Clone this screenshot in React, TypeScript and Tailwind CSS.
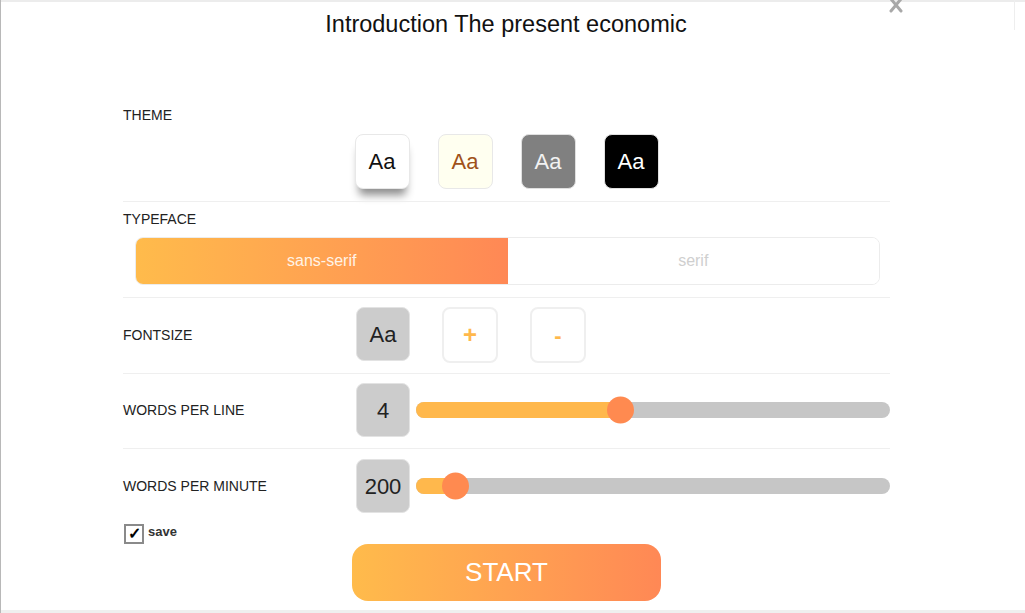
import React from "react";

// reader settings panel
const themes = [
  { key: "light", box: "bg-white border-[#e8e8e8] text-[#111] shadow-[0_10px_8px_-4px_rgba(0,0,0,0.45)]" },
  { key: "sepia", box: "bg-[#fffff0] border-[#e8e8e8] text-[#a0521a]" },
  { key: "gray", box: "bg-[#808080] border-[#e0e0e0] text-[#f2f2f2]" },
  { key: "dark", box: "bg-black border-[#e0e0e0] text-white" },
];

function Divider() {
  return <div className="h-px w-full bg-[#efefef]" />;
}

function ValueBox({ children }: { children: React.ReactNode }) {
  return (
    <div className="w-[54px] h-[54px] shrink-0 rounded-[8px] bg-[#cccccc] border border-[#e3e3e3] flex items-center justify-center text-[22px] text-[#222]">
      {children}
    </div>
  );
}

function Slider({ pct }: { pct: number }) {
  return (
    <div className="relative flex-1 h-[16px] ml-[6px] rounded-full bg-[#c6c6c6]">
      <div
        className="absolute left-0 top-0 h-full rounded-full bg-[#ffb84c]"
        style={{ width: `${pct}%` }}
      />
      <div
        className="absolute top-1/2 w-[27px] h-[27px] -ml-[13px] -translate-y-1/2 rounded-full bg-[#ff8a50]"
        style={{ left: `${pct}%` }}
      />
    </div>
  );
}

export default function App() {
  return (
    <div
      className="w-[1025px] h-[613px] overflow-hidden bg-white border-l border-[#b8b8b8] flex flex-col relative"
      style={{ fontFamily: '"Liberation Sans", Arial, sans-serif' }}
    >
      <div className="h-[2px] bg-[#ececec]" />
      {/* close */}
      <svg
        className="absolute left-[888px] -top-[2px]"
        width="14"
        height="15"
        viewBox="0 0 14 15"
      >
        <path d="M2 1 L12 13 M12 1 L2 13" stroke="#a8a8a8" strokeWidth="3" strokeLinecap="round" />
      </svg>
      <div className="absolute left-[1013px] top-0 w-px h-[30px] bg-[#eeeeee]" />

      <div className="h-[46px] pr-[14px] flex items-center justify-center text-[23.5px] text-[#111]">
        Introduction The present economic
      </div>

      <div className="ml-[122px] w-[767px] flex flex-col">
        {/* theme */}
        <div className="mt-[57px] text-[14px] leading-[20px] text-[#222]">THEME</div>
        <div className="mt-[9px] flex justify-center gap-[28px]">
          {themes.map((t) => (
            <div
              key={t.key}
              className={`w-[55px] h-[55px] rounded-[8px] border flex items-center justify-center text-[22px] ${t.box}`}
            >
              Aa
            </div>
          ))}
        </div>
        <div className="mt-[12px]">
          <Divider />
        </div>

        {/* typeface */}
        <div className="mt-[7px] text-[14px] leading-[20px] text-[#222]">TYPEFACE</div>
        <div className="mt-[8px] ml-[12px] mr-[10px] h-[48px] rounded-[8px] border border-[#ececec] flex overflow-hidden">
          <div className="flex-1 flex items-center justify-center bg-gradient-to-r from-[#ffbb4b] to-[#ff8855] text-[16px] text-[#fff3e6]">
            sans-serif
          </div>
          <div className="flex-1 flex items-center justify-center bg-white text-[16px] text-[#cfcfcf]">
            serif
          </div>
        </div>
        <div className="mt-[12px]">
          <Divider />
        </div>

        {/* fontsize */}
        <div className="mt-[10px] flex items-center h-[54px]">
          <div className="w-[233px] text-[14px] text-[#222]">FONTSIZE</div>
          <div className="flex gap-[32px]">
            <ValueBox>Aa</ValueBox>
            <div className="w-[56px] h-[56px] rounded-[8px] border-2 border-[#efefef] flex items-center justify-center text-[24px] font-bold text-[#ffb84c]">
              +
            </div>
            <div className="w-[56px] h-[56px] rounded-[8px] border-2 border-[#efefef] flex items-center justify-center text-[22px] font-bold text-[#ffb84c]">
              -
            </div>
          </div>
        </div>
        <div className="mt-[11px]">
          <Divider />
        </div>

        {/* words per line */}
        <div className="mt-[9px] flex items-center h-[54px]">
          <div className="w-[233px] text-[14px] text-[#222]">WORDS PER LINE</div>
          <ValueBox>4</ValueBox>
          <Slider pct={43} />
        </div>
        <div className="mt-[11px]">
          <Divider />
        </div>

        {/* words per minute */}
        <div className="mt-[10px] flex items-center h-[54px]">
          <div className="w-[233px] text-[14px] text-[#222]">WORDS PER MINUTE</div>
          <ValueBox>200</ValueBox>
          <Slider pct={8.2} />
        </div>

        {/* save */}
        <div className="mt-[11px] flex items-start gap-[4px] h-[20px]">
          <div className="ml-[1px] w-[20px] h-[20px] border-2 border-[#8a8a8a] bg-white flex items-center justify-center text-[16px] font-bold text-black leading-none">
            ✓
          </div>
          <span className="text-[13px] font-bold text-[#333] leading-[16px]">save</span>
        </div>

        <div className="flex justify-center">
          <div className="w-[309px] h-[57px] rounded-[16px] bg-gradient-to-r from-[#ffbb4b] to-[#ff8855] flex items-center justify-center text-[26px] text-white">
            START
          </div>
        </div>
      </div>

      <div className="mt-auto h-[3px] bg-[#efefef]" />
    </div>
  );
}
